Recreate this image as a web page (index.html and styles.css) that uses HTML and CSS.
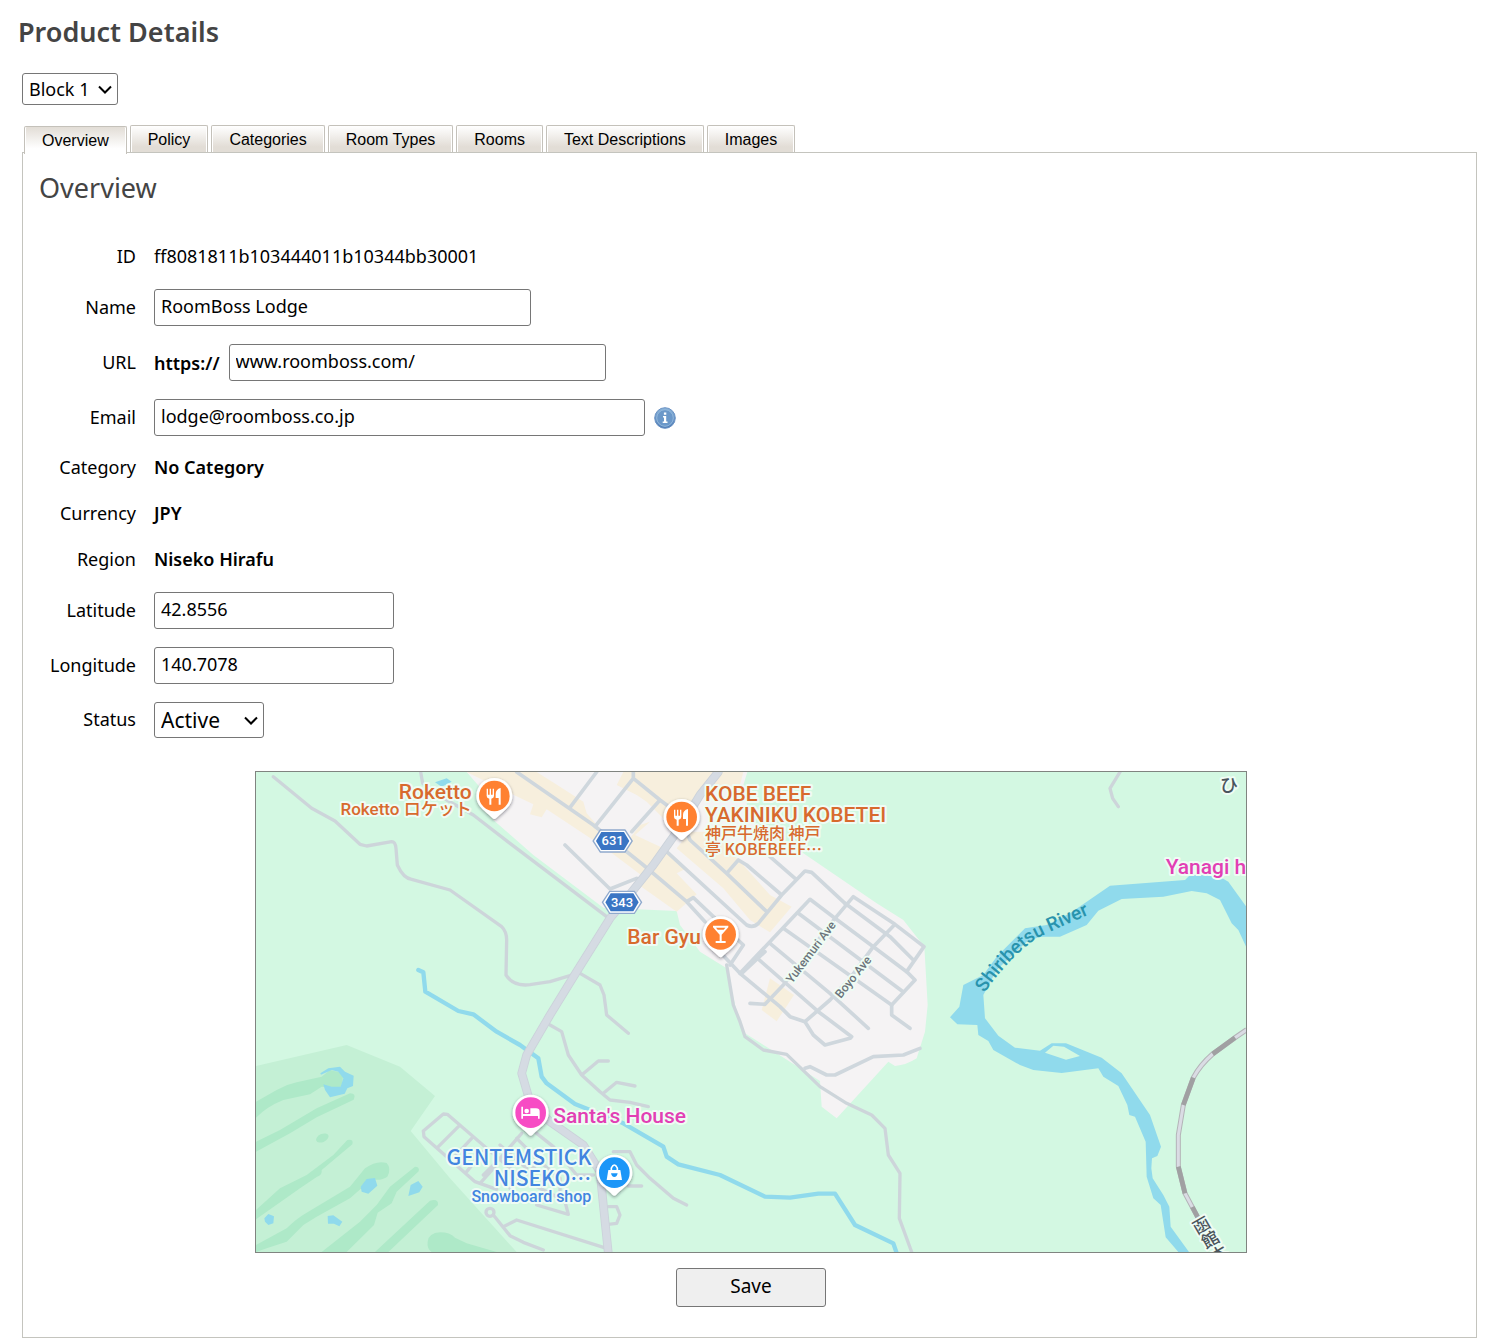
FILE: index.html
```html
<!DOCTYPE html>
<html lang="en">
<head>
<meta charset="utf-8">
<title>Product Details</title>
<link rel="stylesheet" href="styles.css">
</head>
<body>
<main class="page">
  <h1 class="page-title">Product Details</h1>
  <select class="block-select" aria-label="Block"><option>Block 1</option><option>Block 2</option></select>

  <nav class="tabs" aria-label="Product sections">
    <a class="tab tab-active" href="#overview" aria-current="page">Overview</a>
    <a class="tab" href="#policy">Policy</a>
    <a class="tab" href="#categories">Categories</a>
    <a class="tab" href="#room-types">Room Types</a>
    <a class="tab" href="#rooms">Rooms</a>
    <a class="tab" href="#text">Text Descriptions</a>
    <a class="tab" href="#images">Images</a>
  </nav>

  <section class="panel" id="overview">
    <h2 class="panel-title">Overview</h2>
    <form class="details">
      <div class="row"><span class="label">ID</span><span>ff8081811b103444011b10344bb30001</span></div>
      <div class="row"><label class="label" for="name">Name</label><input class="field field-wide" id="name" type="text" value="RoomBoss Lodge"></div>
      <div class="row"><label class="label" for="url">URL</label><div class="control"><b>https://</b><input class="field field-wide" id="url" type="text" value="www.roomboss.com/"></div></div>
      <div class="row"><label class="label" for="email">Email</label><div class="control"><input class="field field-email" id="email" type="text" value="lodge@roomboss.co.jp">
        <svg class="info" viewBox="0 0 22 22" role="img" aria-label="Information">
          <defs><linearGradient id="ig" x1="0" y1="0" x2="0" y2="1"><stop offset="0" stop-color="#8ab4da"/><stop offset="1" stop-color="#4c7ab4"/></linearGradient></defs>
          <circle cx="11" cy="11" r="10.3" fill="url(#ig)" stroke="#6a92c4" stroke-width="1"/>
          <circle cx="11" cy="11" r="8.3" fill="#6b98c9" stroke="#94b9dd" stroke-width="1"/>
          <path d="M9 9h3.2v5.6h1.3v1.4H8.7v-1.4H10v-4.2H9zM9.9 5.5h2.4v2.2H9.9z" fill="#fff"/>
        </svg></div></div>
      <div class="row"><span class="label">Category</span><b>No Category</b></div>
      <div class="row"><span class="label">Currency</span><b>JPY</b></div>
      <div class="row"><span class="label">Region</span><b>Niseko Hirafu</b></div>
      <div class="row"><label class="label" for="lat">Latitude</label><input class="field field-coord" id="lat" type="text" value="42.8556"></div>
      <div class="row"><label class="label" for="lng">Longitude</label><input class="field field-coord" id="lng" type="text" value="140.7078"></div>
      <div class="row"><label class="label" for="status">Status</label><select class="status-select" id="status"><option>Active</option><option>Inactive</option></select></div>

      <svg class="map" viewBox="18 21 2970 1440" role="img" aria-label="Map of Niseko Hirafu">
        <defs>
          <filter id="shadow" x="-20%" y="-20%" width="140%" height="150%"><feDropShadow dx="0" dy="4" stdDeviation="4" flood-color="#223" flood-opacity=".5"/></filter>
          <path id="pin" d="M0-54C-30-54-54-30-54 0C-54 20-44 32-30 44C-20 53-12 60-6 66Q0 72 6 66C12 60 20 53 30 44C44 32 54 20 54 0C54-30 30-54 0-54Z" fill="#fff" filter="url(#shadow)"/>
          <g id="fork" fill="#fff"><path d="M-23-22h4v18h5v-18h4v18h5v-18h4v22q0 6-8 8v18h-6v-18q-8-2-8-8zM19-24v50h-6v-20h-9v-12q0-14 15-18z"/></g>
          <g id="shield"><path d="M-38-35H38L61 0L38 35H-38L-61 0Z" fill="#8fa9cd"/><path d="M-36-31H36L56 0L36 31H-36L-56 0Z" fill="#fff"/><path d="M-34-27H34L50 0L34 27H-34L-50 0Z" fill="#3a75c4"/></g>
        </defs>
        <rect width="3000" height="1480" fill="#d3f8e2"/>

        <!-- golf course -->
        <g transform="translate(0 720)">
          <path d="M18 183L290 120L450 185L555 273L482 378L600 520L800 741H18Z" fill="#c4f0d5"/>
          <g fill="#aee9c8">
            <path d="M18 290L80 255Q110 238 140 232L215 215L240 195L280 205L275 250L215 245L180 268L100 285Q50 305 18 338Z"/>
            <path d="M18 410L90 375L200 310L300 265Q320 265 311 284L200 337L120 385L18 440Z"/>
            <ellipse cx="217" cy="399" rx="20" ry="12" transform="rotate(-25 217 399)"/>
            <path d="M18 615L90 550L170 510L250 450L292 405Q312 402 307 418L215 495Q218 510 200 516L150 550L18 643Z"/>
            <path d="M18 720L110 670Q140 640 170 623L300 545L345 490Q380 465 410 474Q425 490 412 515Q395 528 365 523L300 580L200 635L160 660L110 710L50 730L18 741Z"/>
            <path d="M215 741L330 650L380 600L420 545L495 485Q510 485 506 499L440 560L425 595L383 623L372 660L290 741Z"/>
            <path d="M375 741L540 587Q566 580 564 600L415 741Z"/>
            <path d="M545 741Q530 730 533 710Q536 684 570 682Q600 682 615 698L650 715L740 741Z"/>
          </g>
          <g fill="#90daec">
            <path d="M211 205L235 190L270 185L285 200L311 212L309 243L292 250L284 266L240 277L225 255L220 238L245 245L272 245L280 220L265 200L245 195L213 209Z"/>
            <path d="M332 545L350 522L375 519L382 542L355 566L335 560ZM475 573L482 540L505 528L518 545L508 562ZM43 640L55 627L72 634L70 655L55 660L45 650ZM233 633L250 631L277 650L268 664L252 656L234 656Z"/>
          </g>
        </g>

        <!-- town -->
        <path d="M650 21L710 90L730 165L850 270L1060 428L1280 438L1290 480L1350 560L1430 610L1460 740L1485 805L1580 865L1710 948L1715 1025L1760 1060L1915 890L1935 903Q1970 900 2000 880L2025 800L2033 720L2023 545L1960 465L1880 415L1660 265L1500 170L1480 60L1492 21Z" fill="#f5f3f4"/>
        <g fill="#f7efdd">
          <path d="M650 21L760 75L850 118L840 148L875 157L890 133L1060 245L1180 335L1170 362L1280 440L1340 388L1280 325L1310 310L1240 250L1155 210L1200 170L1170 180L1110 260L1010 145L1000 110L930 65L860 21Z"/>
          <path d="M1120 21H1480L1465 80L1400 60L1310 130L1250 170L1190 110L1160 90L1100 60ZM1320 200L1390 200L1560 390L1625 425L1560 502L1500 465L1420 370L1280 250Z"/>
          <path d="M1560 640L1632 690L1580 769L1535 735Z"/>
        </g>

        <!-- river and streams -->
        <path fill-rule="evenodd" fill="#90daec" d="M3000 440L2935 350L2900 330H2820L2805 345L2580 362L2460 445L2390 480L2325 490L2240 575L2200 630L2140 660L2128 725L2100 757L2122 778L2182 780L2185 810L2215 828L2230 855L2310 900L2350 915L2435 924L2545 910L2560 935L2605 963L2632 1020L2638 1050L2655 1055L2687 1130L2690 1235L2710 1300L2732 1320L2747 1417L2785 1461H2817L2762 1385L2758 1325L2740 1290L2708 1240L2704 1210L2706 1180L2722 1173L2733 1145L2700 1050L2615 925L2555 878L2448 835H2405L2370 857L2295 848L2245 812L2205 760L2200 690L2240 615L2330 530L2370 515H2430L2510 480L2545 437L2615 402L2740 395L2825 378L2870 385L2910 405L2945 475L2965 495L3000 570ZM2385 863L2410 842L2442 845L2490 873L2448 884Z"/>
        <path d="M555 52L590 40L605 50L575 65Z" fill="#90daec"/>
        <path class="stream" d="M505 615L520 622L526 680L625 738L670 748L740 800L810 840L865 880L875 935L890 955L975 1017L1120 1075L1240 1145L1250 1175L1285 1198L1410 1230L1545 1295L1620 1298L1705 1286H1755L1815 1380L1930 1435L1942 1470"/>

        <!-- minor roads -->
        <g class="track">
          <path d="M70 35L185 130L255 168L330 238L350 243L425 230Q436 230 438 250L442 300Q460 340 485 343L600 375L755 485Q770 500 770 525L768 630Q790 665 840 659L900 650L960 632L985 622L1050 660L1062 690L1070 750L1135 805"/>
          <path d="M512 21L518 55L590 105L670 150L780 235L1070 455M2610 21L2580 70L2588 100L2605 125"/>
          <path d="M900 780L935 800L955 870L995 930L1050 980L1080 1005L1140 1012L1195 1025M995 930L1045 888H1075M1060 985L1100 952L1155 963"/>
          <path d="M1090 1160H1140L1160 1200L1200 1240L1270 1300L1310 1320M1135 1263H1175M1075 1325H1100L1110 1350L1100 1375L1075 1378"/>
          <path d="M520 1098L580 1047L592 1048L780 1210L850 1260L940 1305M520 1098L522 1115L675 1250L740 1273M625 1085L562 1148M665 1120L605 1185M700 1160L650 1220M735 1205L690 1255M860 1105L910 1145L980 1230H1030M815 1105L750 1180L700 1230M800 1120L870 1190L780 1270M870 1190L930 1240V1300M860 1320L955 1348L945 1310M750 1140L830 1210"/>
          <circle cx="720" cy="1342" r="12"/><path d="M730 1350L780 1412L820 1432L880 1455M760 1385L800 1365L1070 1450"/>
        </g>
        <path class="track" d="M1430 600L1450 720L1470 770L1485 815L1540 855L1610 868L1710 965L1790 1015L1865 1050L1905 1090L1915 1170L1950 1225L1948 1360L1985 1461"/>

        <!-- town streets -->
        <g class="street">
          <path d="M800 21L1030 180L1180 300L1310 410L1365 470M1040 21L958 130M1150 21V40L1035 185M1150 40L1230 105L1290 150L1320 225L1430 325L1550 440M1230 105L1145 200M945 240L1080 372L1160 340M1250 260L1490 480Q1510 490 1525 475L1595 390L1665 318L1685 322L1785 415M1430 325L1465 285L1490 300L1595 390M1310 410L1330 398L1390 455L1480 540L1440 600M1390 540L1470 625L1590 725L1620 755L1665 770M1545 560L1475 625M1560 275L1635 340"/>
          <path d="M1470 625L1680 403L1755 460L1870 545L1970 620L1995 645L1925 720V750L1980 790"/>
          <path d="M1755 460L1810 395L1935 478L2022 545L1970 620M1785 415L1920 515L1990 585M1645 445L1960 681M1600 490L1925 720M1560 535L1740 685L1855 790M1520 578L1705 740L1805 815L1800 820L1725 840L1690 810L1665 770M1935 478L1870 545L1800 640L1740 705L1665 770M1755 460L1600 660L1545 718L1500 715"/>
          <path d="M1665 910L1680 905L1730 930H1755L1870 875L1960 870L2010 850"/>
        </g>
        <path class="main-edge" d="M1405 21L1350 90L1295 180L1210 300L1130 400L1080 460L980 620L900 750L830 870L815 925L840 1010L900 1070L1000 1140L1050 1220L1060 1320L1075 1465"/>
        <path class="main-road" d="M1405 21L1350 90L1295 180L1210 300L1130 400L1080 460L980 620L900 750L830 870L815 925L840 1010L900 1070L1000 1140L1050 1220L1060 1320L1075 1465"/>

        <!-- railway -->
        <g class="rail">
          <path stroke="#b4b4b8" stroke-width="15" d="M2990 794L2955 818L2888 867Q2850 900 2830 938L2800 1020L2785 1110V1205L2805 1285L2845 1360"/>
          <path stroke="#dadce4" stroke-width="9" d="M2990 794L2955 818L2888 867Q2850 900 2830 938L2800 1020L2785 1110V1205L2805 1285L2845 1360"/>
          <path stroke="#a0a0a2" stroke-width="14" d="M2955 818L2888 867M2830 938L2800 1020M2785 1205L2805 1285M2827 1326L2845 1360"/>
        </g>

        <!-- labels -->
        <g class="poi" fill="#d86a2e">
          <text x="665" y="102" text-anchor="end" font-size="63">Roketto</text>
          <text x="665" y="150" text-anchor="end" font-size="51">Roketto ロケット</text>
          <text x="1365" y="107" font-size="63">KOBE BEEF</text>
          <text x="1365" y="170" font-size="63">YAKINIKU KOBETEI</text>
          <text x="1365" y="221" font-size="48" class="cjk" lang="ja">神戸牛焼肉 神戸</text>
          <text x="1365" y="271" font-size="48" class="cjk" lang="ja">亭 KOBEBEEF⋯</text>
          <text x="1132" y="538" font-size="63">Bar Gyu</text>
        </g>
        <g class="poi" fill="#e23fb4">
          <text x="910" y="1074" font-size="63">Santa's House</text>
          <text x="2747" y="327" font-size="63">Yanagi h</text>
        </g>
        <g class="poi" fill="#4285e0">
          <text x="1024" y="1200" text-anchor="end" font-size="63" class="cjk" lang="ja">GENTEMSTICK</text>
          <text x="1024" y="1263" text-anchor="end" font-size="63" class="cjk" lang="ja">NISEKO⋯</text>
          <text x="1024" y="1311" text-anchor="end" font-size="48">Snowboard shop</text>
        </g>
        <g class="poi" fill="#6b747b">
          <text font-size="36" transform="translate(1626 657) rotate(-53)">Yukemuri Ave</text>
          <text font-size="36" transform="translate(1772 702) rotate(-51)">Boyo Ave</text>
          <text x="2910" y="82" font-size="54" class="cjk" lang="ja" fill="#4a545c">ひ</text>
          <g fill="#4a545c" font-size="51">
            <text class="cjk" lang="ja" transform="translate(2842 1410) rotate(-30)">函</text>
            <text class="cjk" lang="ja" transform="translate(2868 1453) rotate(-30)">館</text>
            <text class="cjk" lang="ja" transform="translate(2894 1496) rotate(-30)">本</text>
          </g>
        </g>
        <path id="river" fill="none" d="M2204 684Q2275 580 2360 520Q2420 490 2560 430"/>
        <text class="river-name" font-size="57"><textPath href="#river">Shiribetsu River</textPath></text>

        <g transform="translate(1088 228)"><use href="#shield"/><text class="route" y="13">631</text></g>
        <g transform="translate(1116 412)"><use href="#shield"/><text class="route" y="13">343</text></g>

        <g transform="translate(733 93)"><use href="#pin"/><circle r="46" fill="#ff8131"/><use href="#fork"/></g>
        <g transform="translate(1295 156)"><use href="#pin"/><circle r="46" fill="#ff8131"/><use href="#fork"/></g>
        <g transform="translate(1412 508)"><use href="#pin"/><circle r="46" fill="#ff8131"/><path d="M-23-26H23V-21L3 1V20H15V26H-15V20H-3V1L-23-21ZM-14-20L-9-14H9L14-20Z" fill="#fff" fill-rule="evenodd"/></g>
        <g transform="translate(842 1043)"><use href="#pin"/><circle r="46" fill="#f74cc4"/><path d="M-28-18h5v22h22v-17h17q11 0 11 10v21h-5v-8h-45v8h-5z" fill="#fff"/><circle cx="-12" cy="-5" r="7" fill="#fff"/></g>
        <g transform="translate(1093 1223)"><use href="#pin"/><circle r="46" fill="#1c96f8"/><path d="M-18-8H18L23 22H-23Z" fill="#fff"/><path d="M-9-8V-14Q0-32 9-14V-8" fill="none" stroke="#fff" stroke-width="5"/><path d="M-10 2H10Q8 13 0 13T-10 2Z" fill="#1c96f8"/></g>
      </svg>

      <button class="save" type="button">Save</button>
    </form>
  </section>
</main>
</body>
</html>
```
FILE: styles.css
```css
* { box-sizing: border-box; }
body {
  margin: 0;
  background: #fff;
  color: #000;
  font: 18px/28px "Lucida Grande", "Lucida Sans Unicode", "Noto Sans", sans-serif;
}
.page { padding: 11px 15px 6px 22px; }
.page-title {
  margin: 0 0 21px -4px;
  color: #444;
  font-size: 27px;
  font-weight: 600;
  line-height: 41px;
}
select, input, button { font-family: inherit; color: #000; }
select, .field {
  border: 1px solid #767676;
  border-radius: 3px;
  background: #fff;
}
select {
  appearance: none;
  padding: 0 20px 1px 6px;
  background: #fff url("data:image/svg+xml,%3Csvg xmlns='http://www.w3.org/2000/svg' width='14' height='9' viewBox='0 0 14 9'%3E%3Cpath d='M1 1.5l6 6 6-6' fill='none' stroke='%23000' stroke-width='2'/%3E%3C/svg%3E") no-repeat right 5px center;
}
.block-select { display: block; width: 96px; height: 32px; font-size: 18px; }

.tabs {
  display: flex;
  gap: 3px;
  height: 28px;
  margin: 20px 0 -1px 2px;
  font: 16px/28px "Liberation Sans", Arial, sans-serif;
}
.tab {
  height: 27px;
  padding: 0 17px;
  border: 1px solid #c4c1ba;
  border-bottom: 0;
  border-radius: 2px 2px 0 0;
  background: linear-gradient(#fff, #e2ddd6 80%);
  box-shadow: inset -1px 0 #fff, inset 1px 0 #fff;
  color: #000;
  text-decoration: none;
}
.tab-active {
  position: relative;
  height: 28px;
  margin-top: 1px;
  background: linear-gradient(#e2ddd6, #fff 80%);
}
.panel { padding: 15px 13px 30px 16px; border: 1px solid #c4c4be; }
.panel-title {
  margin: 0 0 27px;
  color: #444;
  font-size: 27px;
  font-weight: 400;
  line-height: 39px;
}
.details { display: flex; flex-direction: column; }
.row {
  display: grid;
  grid-template-columns: 97px 1fr;
  column-gap: 18px;
  align-items: center;
  padding: 9px 0;
}
.label, .row > b, .row > span { padding-bottom: 2px; line-height: 26px; }
.label { text-align: right; }
.control { display: flex; align-items: center; gap: 9px; }
.row b { font-weight: 600; }
.field { height: 37px; padding: 0 6px 3px; font-size: 18px; }
.field-wide { width: 377px; }
.field-email { width: 491px; }
.field-coord { width: 240px; }
.status-select { width: 110px; height: 36px; font-size: 21px; }
.info { width: 22px; height: 22px; }

.map {
  width: 992px;
  max-width: 100%;
  margin: 24px auto 15px;
  border: 1px solid #808480;
}
.track, .street, .stream, .main-edge, .main-road, .rail {
  fill: none;
  stroke-linecap: round;
  stroke-linejoin: round;
}
.track { stroke: #cdd5da; stroke-width: 10px; }
.street { stroke: #cfd7dd; stroke-width: 11px; }
.stream { stroke: #90daec; stroke-width: 13px; }
.main-edge { stroke: #cbd2da; stroke-width: 26px; }
.main-road { stroke: #d5dbe3; stroke-width: 21px; }
.rail { stroke-linecap: butt; }
.poi {
  font-family: Roboto, "Noto Sans CJK JP", sans-serif;
  font-weight: 500;
  paint-order: stroke;
  stroke: #effcf4;
  stroke-width: 12px;
  stroke-linejoin: round;
}
.cjk { font-family: "Noto Sans CJK JP", sans-serif; }
.river-name { fill: #2893ac; font-family: Roboto, sans-serif; font-weight: 500; }
.route {
  fill: #fff;
  font: 500 39px Roboto, sans-serif;
  text-anchor: middle;
}
.save {
  align-self: center;
  width: 150px;
  height: 39px;
  padding: 0 0 3px;
  border: 1px solid #767676;
  border-radius: 3px;
  background: #efefef;
  font-size: 19px;
}
```
